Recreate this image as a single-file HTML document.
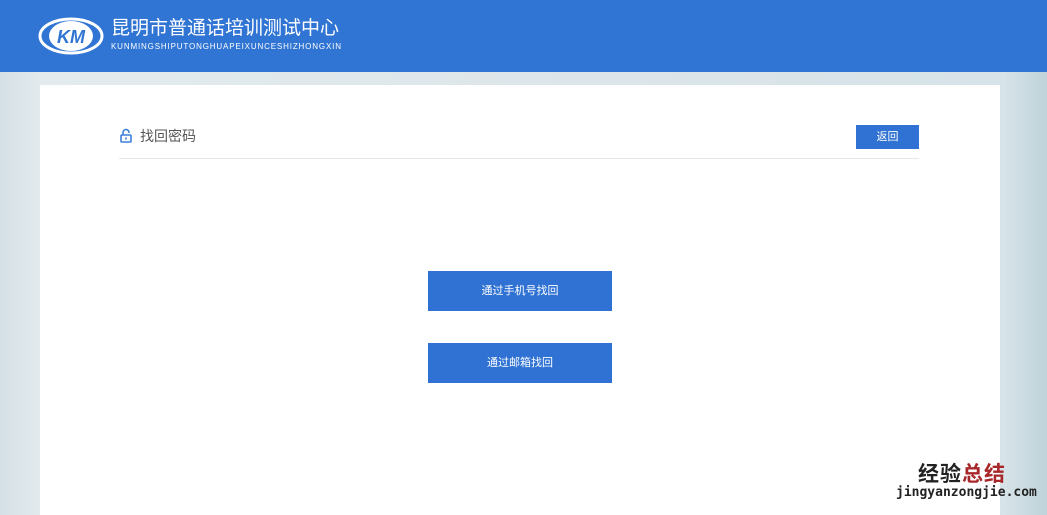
<!DOCTYPE html>
<html><head><meta charset="utf-8"><style>
*{margin:0;padding:0;box-sizing:border-box}
body{width:1047px;height:509px;overflow:hidden;font-family:"Liberation Sans","Noto Sans CJK SC",sans-serif;background:linear-gradient(90deg,#d5e0e6 0%,#e3ebee 4%,#dde6ea 50%,#d6e3e8 96%,#bfd3da 100%);position:relative}
.hdr{position:absolute;left:0;top:0;width:1047px;height:72px;background:#3074d4}
.t1{position:absolute;left:111px;top:18px;color:#fff;font-size:19px;line-height:22px}
.t2{position:absolute;left:111px;top:42px;color:#fff;font-size:8px;line-height:10px;letter-spacing:0.85px}
.card{position:absolute;left:40px;top:85px;width:960px;height:430px;background:#fff}
.ttl{position:absolute;left:140px;top:126px;font-size:14px;color:#555}
.line{position:absolute;left:119px;top:158px;width:800px;height:1px;background:#e8e8e8}
.back{position:absolute;left:856px;top:125px;width:63px;height:24px;background:#2f72d3;color:#fff;font-size:11px;text-align:center;line-height:24px}
.btn{position:absolute;left:428px;width:184px;height:40px;background:#2f72d3;color:#fff;font-size:11px;text-align:center;line-height:40px}
.wm1{position:absolute;left:918px;top:458px;font-size:21px;font-weight:bold;color:#222;letter-spacing:1px}
.wm2{position:absolute;left:896px;top:485px;font-size:13px;color:#222;font-family:"DejaVu Sans Mono",monospace;font-weight:bold}
</style></head><body>
<div class="hdr">
<svg style="position:absolute;left:38px;top:16px" width="66" height="40" viewBox="0 0 66 40"><ellipse cx="33" cy="20" rx="31" ry="17" fill="none" stroke="#fff" stroke-width="3"/><ellipse cx="33" cy="20" rx="22" ry="15" fill="#fff"/><text x="33" y="27" text-anchor="middle" font-size="18" font-weight="bold" font-style="italic" fill="#3074d4" font-family="Liberation Sans">KM</text></svg>
<div class="t1">昆明市普通话培训测试中心</div>
<div class="t2">KUNMINGSHIPUTONGHUAPEIXUNCESHIZHONGXIN</div>
</div>
<div class="card"></div>
<svg style="position:absolute;left:120px;top:128px" width="12" height="15" viewBox="0 0 12 15"><path d="M3 7V4.5a3 3 0 0 1 6 0V5" fill="none" stroke="#3a7fd8" stroke-width="1.6"/><rect x="1" y="7" width="10" height="7" rx="1" fill="none" stroke="#3a7fd8" stroke-width="1.6"/><rect x="5.3" y="9.3" width="1.4" height="2.5" fill="#3a7fd8"/></svg>
<div class="ttl">找回密码</div>
<div class="back">返回</div>
<div class="line"></div>
<div class="btn" style="top:271px">通过手机号找回</div>
<div class="btn" style="top:343px">通过邮箱找回</div>
<div class="wm1">经验<span style="color:#a8282a">总结</span></div>
<div class="wm2">jingyanzongjie.com</div>
</body></html>
